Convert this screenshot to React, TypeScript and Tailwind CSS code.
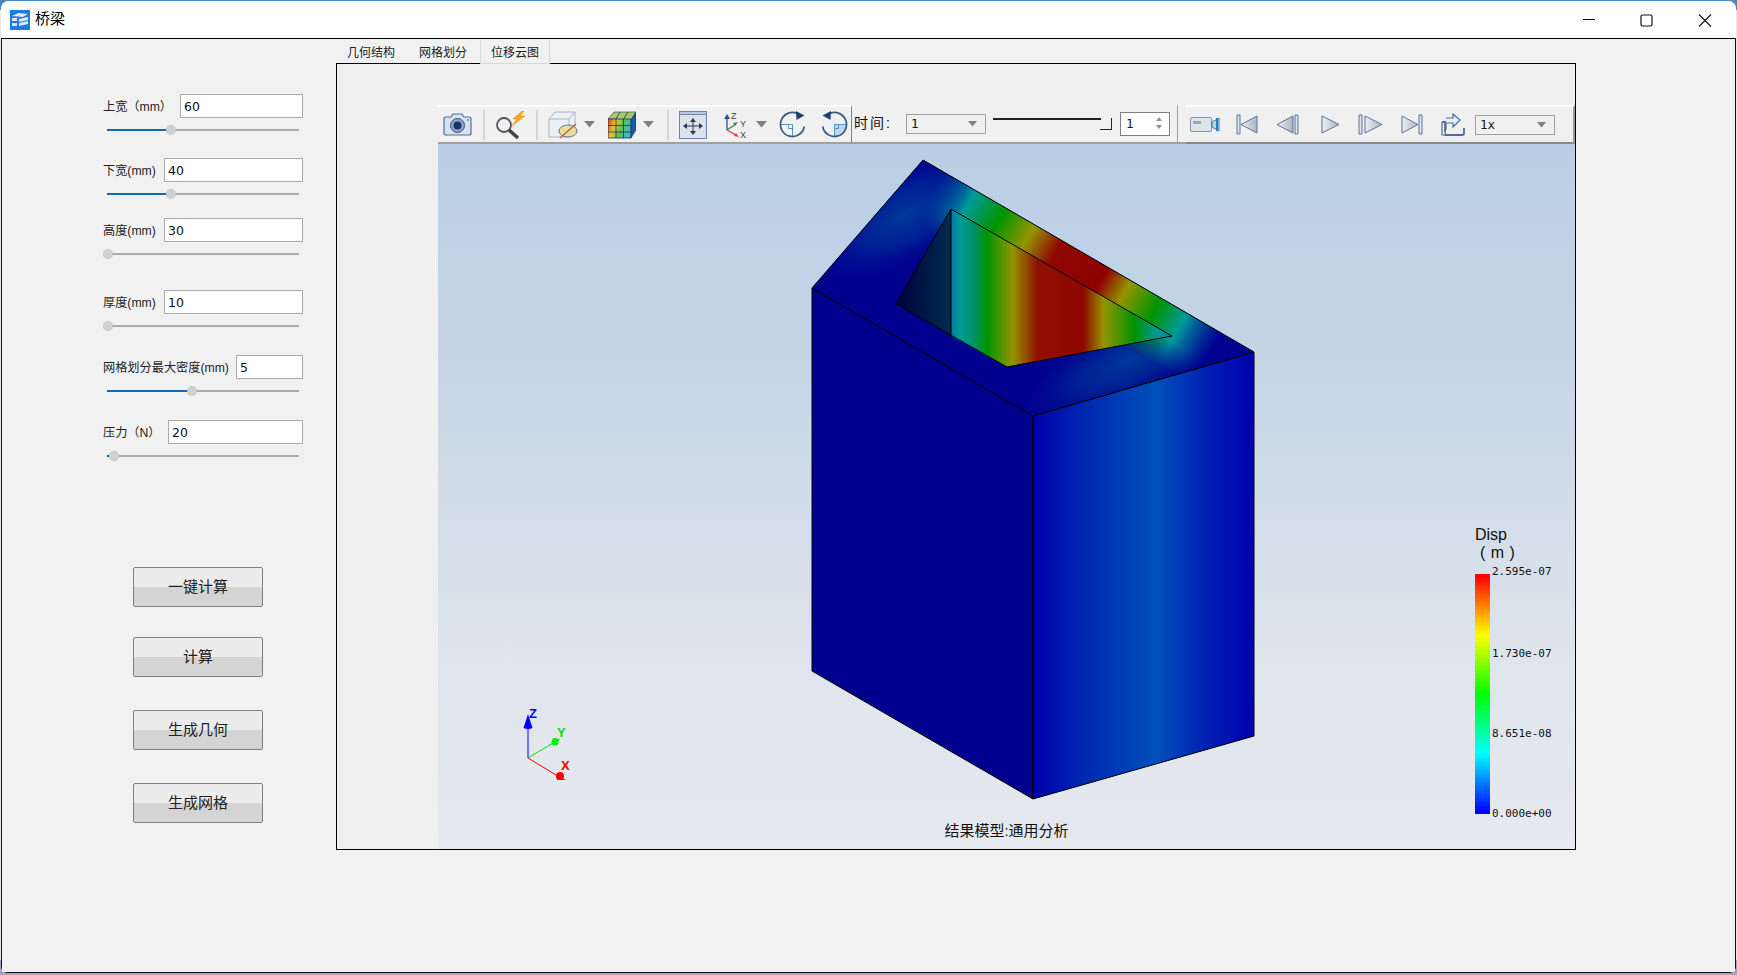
import { useState } from "react";

// jet colour bar, top to bottom
function jet(t: number) {
  const c = (v: number) => Math.round(Math.max(0, Math.min(1, v)) * 255);
  const r = c(t < 0.5 ? 0 : t < 0.75 ? (t - 0.5) * 4 : 1);
  const g = c(t < 0.25 ? t * 4 : t < 0.75 ? 1 : (1 - t) * 4);
  const b = c(t < 0.25 ? 1 : t < 0.5 ? (0.5 - t) * 4 : 0);
  return `rgb(${r},${g},${b})`;
}
const bands = Array.from({ length: 60 }, (_, i) => jet(1 - i / 59));

function Field({ label, value, inputW, pct, rowClass }: { label: string; value: string; inputW: string; pct: number; rowClass: string }) {
  return (
    <div className={rowClass}>
      <div className="flex items-center justify-between h-6">
        <span className="pt-[2px] text-[12.2px] text-[#222] whitespace-pre">{label}</span>
        <input readOnly value={value} className={`${inputW} h-6 border border-[#ababab] bg-white pl-[3px] text-[12.5px] text-[#111] font-['DejaVu_Sans'] outline-none`} />
      </div>
      <div className="relative h-[2px] mt-[11px] ml-1 bg-[#ababab] w-[192px]">
        <div className="absolute left-0 top-0 h-full bg-[#0f68b8]" style={{ width: `${pct}%` }} />
        <div className="absolute top-[-4px] w-[10px] h-[10px] rounded-full bg-[#d0d0d0] border border-dotted border-[#bbb]" style={{ left: `calc(${pct}% - 4px)` }} />
      </div>
    </div>
  );
}

function Btn({ text, cls }: { text: string; cls: string }) {
  return (
    <button className={`${cls} w-[130px] h-10 rounded-[2px] border border-[#808080] bg-[linear-gradient(#ececec_0,#ececec_50%,#d4d4d4_50%,#d4d4d4_100%)] text-[15px] text-[#222] ml-[30px]`}>
      {text}
    </button>
  );
}

function Tri() {
  return <svg width="11" height="7" viewBox="0 0 11 7"><path d="M0 0h11L5.5 6.5z" fill="#808080" /></svg>;
}

function Combo({ value }: { value: string }) {
  return (
    <div className="w-20 h-5 border border-[#a0a0a0] flex items-center justify-between pl-1 pr-2 text-[12.5px] font-['DejaVu_Sans_Mono'] text-[#111] bg-[#f0f0f0]">
      <span className="pt-[2px]">{value}</span>
      <svg width="9" height="6" viewBox="0 0 9 6"><path d="M0 0h9L4.5 5.5z" fill="#808080" /></svg>
    </div>
  );
}

function Sep({ cls }: { cls: string }) {
  return <div className={`${cls} w-[2px] h-[30px] bg-[#d4d4d4]`} />;
}

const stroke = "#4d6e9c";

function Camera() {
  return (
    <svg width="29" height="23" viewBox="0 0 29 23">
      <path d="M1 6q0-2 2-2h5l2-3h9l2 3h5q2 0 2 2v14q0 2-2 2H3q-2 0-2-2z" fill="#d4e3f3" stroke={stroke} strokeWidth="1.2" />
      <circle cx="14.5" cy="12.5" r="7" fill="#8ba7c9" stroke="#456" />
      <circle cx="14.5" cy="12.5" r="4" fill="#1a3468" />
      <circle cx="25" cy="7" r="0.8" fill="#345" />
    </svg>
  );
}

function SearchBolt() {
  return (
    <svg width="30" height="28" viewBox="0 0 30 28">
      <circle cx="8" cy="14" r="7" fill="#eef2f6" stroke="#555" strokeWidth="1.8" />
      <path d="M13 19l9 8" stroke="#444" strokeWidth="3.4" />
      <path d="M26 0l-9 8h4l-5 7 13-10h-5l4-5z" fill="#f5a623" stroke="#d98a10" strokeWidth="0.5" />
    </svg>
  );
}

function ClipCube() {
  return (
    <svg width="30" height="28" viewBox="0 0 30 28">
      <path d="M1 8l6-7h20v17l-6 8H1z" fill="#eceff4" stroke="#a9b4c6" />
      <path d="M1 8h20v18M21 8l6-7" fill="none" stroke="#a9b4c6" />
      <ellipse cx="20" cy="20" rx="9" ry="6" fill="#ecdc9c" stroke="#5a7399" />
      <path d="M12 27L28 13" stroke="#c25a3a" strokeWidth="1.3" />
    </svg>
  );
}

function ColorCube() {
  return (
    <svg width="28" height="28" viewBox="0 0 28 28">
      <defs>
        <linearGradient id="cc" x1="0" y1="0" x2="1" y2="0.3">
          <stop offset="0" stopColor="#d8392a" />
          <stop offset="0.35" stopColor="#e8c531" />
          <stop offset="0.65" stopColor="#5cc24d" />
          <stop offset="1" stopColor="#42b4c8" />
        </linearGradient>
      </defs>
      <path d="M0 8l6-7h22l-5 8z" fill="#a8c86a" stroke="#2a3a5a" strokeWidth="0.6" />
      <path d="M0 8h23v19H0z" fill="url(#cc)" stroke="#23304e" strokeWidth="0.8" />
      <path d="M23 9l5-8v18l-5 8z" fill="#1f58b0" stroke="#23304e" strokeWidth="0.6" />
      <path d="M8 8v19M15.5 8v19M0 14.5h23M0 21h23M12 1L8 8M20 1l-4.5 7" stroke="#23304e" strokeWidth="0.8" />
    </svg>
  );
}

function FitBox() {
  return (
    <svg width="28" height="28" viewBox="0 0 28 28">
      <rect x="0.5" y="0.5" width="27" height="27" fill="#dde2ea" stroke="#6f88aa" />
      <rect x="0.5" y="0.5" width="27" height="3" fill="#b9c8dc" stroke="#6f88aa" />
      <path d="M14 7l-3 4h6zM14 24l-3-4h6zM4 15l4-3v6zM24 15l-4-3v6z" fill="#2a3a50" />
      <path d="M14 10v10M7 15h14" stroke="#2a3a50" />
    </svg>
  );
}

function AxesIcon() {
  return (
    <svg width="26" height="28" viewBox="0 0 26 28">
      <path d="M5 19V6" stroke="#2a50a0" strokeWidth="1.3" />
      <path d="M5 3L2 8h6z" fill="#2a50a0" />
      <path d="M5 19l9-6" stroke="#2a9050" strokeWidth="1.3" />
      <path d="M16 11l-5 1 2 3z" fill="#2a9050" />
      <path d="M5 19l9 5" stroke="#d8404a" strokeWidth="1.3" />
      <path d="M17 26l-5-1 2-3z" fill="#d8404a" />
      <text x="9" y="8" fontSize="9" fill="#444" fontFamily="Liberation Sans">Z</text>
      <text x="18" y="16" fontSize="9" fill="#444" fontFamily="Liberation Sans">Y</text>
      <text x="18" y="27" fontSize="9" fill="#444" fontFamily="Liberation Sans">X</text>
    </svg>
  );
}

// quarter wedge lower left, flipped for the other direction
function Rotate({ flip, wedge }: { flip?: boolean; wedge: string }) {
  return (
    <svg width="27" height="27" viewBox="0 0 27 27" className={flip ? "-scale-x-100" : ""}>
      <path d="M1.5 13.5H13.5V25.5A12 12 0 0 1 1.5 13.5z" fill={wedge} />
      <path d="M1.5 13.5H13.5V25.5M9.5 13.5V17.5H13.5" stroke="#4a87c0" strokeWidth="0.9" fill="none" />
      <path d="M25.3 15.5A12 12 0 1 1 18 2.4" fill="none" stroke="#3d5a80" strokeWidth="1.7" />
      <path d="M17 0l8.5 4.5-8 4.5z" fill="#1e3f70" />
    </svg>
  );
}

function Video() {
  return (
    <svg width="31" height="17" viewBox="0 0 31 17">
      <rect x="0.5" y="1.5" width="21" height="14" rx="1.5" fill="#dfe3ea" stroke="#7e93ad" />
      <rect x="3" y="5" width="8" height="3" fill="#9aa7b8" />
      <path d="M22 6l7-4v13l-7-4z" fill="#b7d6ea" stroke="#4c7da8" />
      <path d="M27 2v13" stroke="#2c7fb8" strokeWidth="2" />
    </svg>
  );
}

function Media({ d, w, bars }: { d: string; w: number; bars: string }) {
  return (
    <svg width={w} height="21" viewBox={`0 0 ${w} 21`}>
      <defs>
        <linearGradient id="md" x1="0" y1="0" x2="1" y2="0">
          <stop offset="0" stopColor="#eef1f5" />
          <stop offset="1" stopColor="#a9b3c0" />
        </linearGradient>
      </defs>
      <path d={d} fill="url(#md)" stroke="#5b7599" strokeWidth="1" />
      {bars && <path d={bars} fill="#dfe4ea" stroke="#5b7599" strokeWidth="1" />}
    </svg>
  );
}

function ExportIcon() {
  return (
    <svg width="24" height="24" viewBox="0 0 24 24">
      <path d="M1 9h3v13h17q2 0 2-2v-5" fill="none" stroke="#4d6e9c" strokeWidth="1.8" />
      <path d="M1 9v13h3M5 17V10h7V14l7-7-7-6v4H5" fill="#e6edf5" stroke="#4d6e9c" strokeWidth="1.2" />
    </svg>
  );
}

function Toolbar() {
  return (
    <div className="h-[39px] flex items-center bg-[#f0f0f0] text-[#111]">
      <div className="h-full flex items-center w-[414px] border-t-2 border-t-white border-b-2 border-b-[#a0a0a0] border-r border-r-[#808080]">
        <div className="ml-[5px]"><Camera /></div>
        <Sep cls="ml-[11px]" />
        <div className="ml-[11px]"><SearchBolt /></div>
        <Sep cls="ml-[10px]" />
        <div className="ml-[10px]"><ClipCube /></div>
        <div className="ml-[6px]"><Tri /></div>
        <div className="ml-[13px]"><ColorCube /></div>
        <div className="ml-[7px]"><Tri /></div>
        <Sep cls="ml-[13px]" />
        <div className="ml-[10px]"><FitBox /></div>
        <div className="ml-[15px]"><AxesIcon /></div>
        <div className="ml-[8px]"><Tri /></div>
        <div className="ml-[12px]"><Rotate wedge="#eef6fc" /></div>
        <div className="ml-[15px]"><Rotate flip wedge="#b8daf4" /></div>
      </div>
      <div className="h-full flex items-center w-[326px] border-r border-r-[#a0a0a0] border-b-2 border-b-[#a0a0a0]">
        <span className="ml-[2px] text-[14px] w-[52px] tracking-[2px]">时间:</span>
        <Combo value="1" />
        <div className="relative ml-[7px] w-[119px] h-[22px]">
          <div className="absolute left-0 right-[11px] top-[5px] h-[2px] bg-[#222]" />
          <div className="absolute right-0 top-[5px] w-[12px] h-[12px] border-r border-b border-[#222]" />
        </div>
        <div className="ml-[8px] w-[50px] h-6 border border-[#808080] flex items-center justify-between pl-[5px] pr-[6px] text-[12.5px] font-['DejaVu_Sans_Mono'] bg-white">
          <span className="pt-[2px]">1</span>
          <svg width="8" height="13" viewBox="0 0 8 13"><path d="M4 0l3 4H1zM4 12l3-4H1z" fill="#909090" /></svg>
        </div>
      </div>
      <div className="h-full w-[8px] border-b-2 border-b-[#a0a0a0]" />
      <div className="h-full flex items-center flex-1 border-t-2 border-t-white border-b-2 border-b-[#8a8a8a] border-r-2 border-r-[#9a9a9a]">
        <div className="ml-[4px]"><Video /></div>
        <div className="ml-[15px]"><Media w={22} d="M21 2v17L5 10.5z" bars="M1 1h3v19H1z" /></div>
        <div className="ml-[18px]"><Media w={24} d="M17 2v17L1 10.5z" bars="M19 1h3v19h-3z" /></div>
        <div className="ml-[21px]"><Media w={19} d="M1 2v17l17-8.5z" bars="" /></div>
        <div className="ml-[18px]"><Media w={25} d="M7 2v17l17-8.5z" bars="M1 1h3v19H1z" /></div>
        <div className="ml-[18px]"><Media w={22} d="M1 2v17l16-8.5z" bars="M18 1h3v19h-3z" /></div>
        <div className="ml-[18px]"><ExportIcon /></div>
        <div className="ml-[10px]"><Combo value="1x" /></div>
      </div>
    </div>
  );
}

// model is drawn in page pixels, viewBox starts at the canvas origin (438,144)
function Model() {
  return (
    <svg className="absolute left-0 top-0" width="1136" height="705" viewBox="438 144 1136 705">
      <defs>
        <linearGradient id="rightFace" gradientUnits="userSpaceOnUse" x1="1033" y1="0" x2="1254" y2="0">
          <stop offset="0" stopColor="#0000ac" />
          <stop offset="0.22" stopColor="#0026b0" />
          <stop offset="0.56" stopColor="#0050ba" />
          <stop offset="0.78" stopColor="#0020b2" />
          <stop offset="1" stopColor="#0000b0" />
        </linearGradient>
        <linearGradient id="topBand" gradientUnits="userSpaceOnUse" x1="923" y1="160" x2="1254" y2="352">
          <stop offset="0.06" stopColor="#004c9c" stopOpacity="0" />
          <stop offset="0.16" stopColor="#009a9a" />
          <stop offset="0.25" stopColor="#009400" />
          <stop offset="0.34" stopColor="#949400" />
          <stop offset="0.42" stopColor="#8f0800" />
          <stop offset="0.56" stopColor="#8f0000" />
          <stop offset="0.63" stopColor="#949400" />
          <stop offset="0.72" stopColor="#009400" />
          <stop offset="0.8" stopColor="#009a9a" />
          <stop offset="0.9" stopColor="#004c9c" stopOpacity="0" />
        </linearGradient>
        <linearGradient id="bandFade" gradientUnits="userSpaceOnUse" x1="923" y1="160" x2="893" y2="212">
          <stop offset="0" stopColor="#fff" />
          <stop offset="0.55" stopColor="#fff" />
          <stop offset="1" stopColor="#000" />
        </linearGradient>
        <mask id="bandMask" maskUnits="userSpaceOnUse" x="438" y="144" width="1136" height="705">
          <rect x="438" y="144" width="1136" height="705" fill="url(#bandFade)" />
        </mask>
        <radialGradient id="halo">
          <stop offset="0" stopColor="#003f98" stopOpacity="0.9" />
          <stop offset="0.5" stopColor="#00389a" stopOpacity="0.55" />
          <stop offset="1" stopColor="#00209a" stopOpacity="0" />
        </radialGradient>
        <linearGradient id="innerFace" gradientUnits="userSpaceOnUse" x1="951" y1="0" x2="1172" y2="0">
          <stop offset="0" stopColor="#007a9a" />
          <stop offset="0.04" stopColor="#009a9a" />
          <stop offset="0.11" stopColor="#009060" />
          <stop offset="0.165" stopColor="#009400" />
          <stop offset="0.28" stopColor="#949400" />
          <stop offset="0.39" stopColor="#901000" />
          <stop offset="0.6" stopColor="#8f0800" />
          <stop offset="0.69" stopColor="#949400" />
          <stop offset="0.83" stopColor="#009400" />
          <stop offset="0.93" stopColor="#009a9a" />
          <stop offset="1" stopColor="#0088a0" />
        </linearGradient>
        <linearGradient id="innerLeft" gradientUnits="userSpaceOnUse" x1="896" y1="0" x2="951" y2="0">
          <stop offset="0" stopColor="#00003c" />
          <stop offset="1" stopColor="#002c4e" />
        </linearGradient>
        <clipPath id="topClip"><path d="M923 160L1254 352L1033 416L812 288z" /></clipPath>
      </defs>
      <path d="M812 288L1033 416V799L812 671z" fill="#00008e" stroke="#000" />
      <path d="M1033 416L1254 352V736L1033 799z" fill="url(#rightFace)" stroke="#000" />
      <path d="M923 160L1254 352L1033 416L812 288z" fill="#00008e" />
      <g clipPath="url(#topClip)">
        <ellipse cx="905" cy="215" rx="105" ry="48" transform="rotate(-28 905 215)" fill="url(#halo)" />
        <ellipse cx="1130" cy="360" rx="115" ry="42" transform="rotate(-26 1130 360)" fill="url(#halo)" />
        <path d="M923 160L1254 352L1033 416L812 288z" fill="url(#topBand)" mask="url(#bandMask)" />
      </g>
      <path d="M923 160L1254 352L1033 416L812 288z" fill="none" stroke="#000" />
      <path d="M951 209L896 304L951 336z" fill="url(#innerLeft)" />
      <path d="M951 209L1172 336L1007 367L951 336z" fill="url(#innerFace)" />
      <path d="M896 304L951 209L1172 336L1007 367L896 304M951 209V336" fill="none" stroke="#000" />

      <path d="M528 758V725" stroke="#0000ff" />
      <path d="M528 714l-4.5 14q4.5 2 9 0z" fill="#0000ff" />
      <path d="M528 758L553 743" stroke="#00e000" />
      <circle cx="555" cy="742" r="3.5" fill="#00f000" />
      <path d="M560 739l-7-1 2 6z" fill="#00f000" />
      <path d="M528 758L556 775" stroke="#f00000" />
      <circle cx="560" cy="776" r="4" fill="#ff0000" />
      <path d="M566 780l-9 0-1-5z" fill="#ff0000" />
      <text x="529" y="718" fontSize="13" fontWeight="700" fill="#0000ff" fontFamily="Liberation Sans">Z</text>
      <text x="557" y="737" fontSize="13" fontWeight="700" fill="#00e000" fontFamily="Liberation Sans">Y</text>
      <text x="561" y="770" fontSize="13" fontWeight="700" fill="#f00000" fontFamily="Liberation Sans">X</text>
    </svg>
  );
}

function Legend() {
  return (
    <div className="absolute left-[1037px] top-[382px] text-[#111]">
      <div className="text-[16px] leading-[18px] font-['Liberation_Sans']">Disp</div>
      <div className="text-[16px] leading-[18px] font-['Liberation_Sans'] whitespace-pre tracking-[0.5px]"> ( m )</div>
      <div className="relative mt-[12px] w-[15px] h-[240px] flex flex-col">
        {bands.map((c, i) => (
          <div key={i} className="flex-1" style={{ background: c }} />
        ))}
        <span className="absolute left-[17px] top-[-9px] text-[11px] leading-[14px] whitespace-nowrap font-['DejaVu_Sans_Mono']">2.595e-07</span>
        <span className="absolute left-[17px] top-[73px] text-[11px] leading-[14px] whitespace-nowrap font-['DejaVu_Sans_Mono']">1.730e-07</span>
        <span className="absolute left-[17px] top-[153px] text-[11px] leading-[14px] whitespace-nowrap font-['DejaVu_Sans_Mono']">8.651e-08</span>
        <span className="absolute left-[17px] top-[233px] text-[11px] leading-[14px] whitespace-nowrap font-['DejaVu_Sans_Mono']">0.000e+00</span>
      </div>
    </div>
  );
}

export default function App() {
  const [tab] = useState(2);
  const tabs = ["几何结构", "网格划分", "位移云图"];
  return (
    <div className="w-[1737px] h-[975px] overflow-hidden px-px pt-px bg-[linear-gradient(#4a86c0_0,#4a86c0_10px,#e8e8ec_10px,#e8e8ec_960px,#a8a4bd_960px,#a8a4bd_100%)] font-['Liberation_Sans','Noto_Sans_CJK_SC',sans-serif]">
      <div className="h-[972px] flex flex-col rounded-t-[8px] rounded-b-[6px] bg-white overflow-hidden">
        <div className="h-[38px] shrink-0 flex items-center bg-white border-b border-b-black">
          <svg className="ml-[9px]" width="20" height="20" viewBox="0 0 20 20">
            <rect width="20" height="20" fill="#1e7ae6" />
            <path d="M2 6l6-3 10 1-5 3zM2 8h5v3H2zM2 13h5v3H2zM9 9l9-2v3l-9 2zM9 13l9-2v3l-9 2z" fill="#dbe9fa" />
          </svg>
          <span className="ml-[5px] text-[15px] text-black">桥梁</span>
          <div className="ml-auto mr-[3px] flex items-center">
            <svg width="58" height="36" viewBox="0 0 58 36"><path d="M24 17.5h12" stroke="#111" strokeWidth="1.2" /></svg>
            <svg width="58" height="36" viewBox="0 0 58 36"><rect x="24" y="13" width="11" height="11" rx="1.5" fill="none" stroke="#111" strokeWidth="1.2" /></svg>
            <svg width="58" height="36" viewBox="0 0 58 36"><path d="M24 12.5l12 12M36 12.5l-12 12" stroke="#111" strokeWidth="1.1" /></svg>
          </div>
        </div>
        <div className="flex-1 flex bg-[#f1f1f1] border-l border-l-[#111] border-r border-r-[#111] border-b border-b-[#111]">
          <div className="w-[334px] shrink-0 flex flex-col pl-[101px] pr-[33px]">
            <Field rowClass="mt-[55px]" label="上宽（mm）" value="60" inputW="w-[123px]" pct={33} />
            <Field rowClass="mt-[27px]" label="下宽(mm)" value="40" inputW="w-[139px]" pct={33} />
            <Field rowClass="mt-[23px]" label="高度(mm)" value="30" inputW="w-[139px]" pct={0} />
            <Field rowClass="mt-[35px]" label="厚度(mm)" value="10" inputW="w-[139px]" pct={0} />
            <Field rowClass="mt-[28px]" label="网格划分最大密度(mm)" value="5" inputW="w-[67px]" pct={44} />
            <Field rowClass="mt-[28px]" label="压力（N）" value="20" inputW="w-[135px]" pct={3} />
            <Btn cls="mt-[110px]" text="一键计算" />
            <Btn cls="mt-[30px]" text="计算" />
            <Btn cls="mt-[33px]" text="生成几何" />
            <Btn cls="mt-[33px]" text="生成网格" />
          </div>
          <div className="w-[1240px] shrink-0 flex flex-col pt-[1px]">
            <div className="relative z-10 h-[23px] flex text-[12px] text-[#222]">
              {tabs.map((t, i) => (
                <div
                  key={t}
                  className={i === tab ? "w-[70px] h-[24px] pt-[2px] flex items-center justify-center border-l border-r border-b border-[#d8d8d8] bg-[#f1f1f1]" : "w-[72px] pt-[2px] pl-[11px] flex items-center"}
                >
                  {t}
                </div>
              ))}
            </div>
            <div className="h-[787px] border border-black flex flex-col pt-[41px] pl-[101px] bg-[#f0f0f0]">
              <Toolbar />
              <div className="relative flex-1 bg-[linear-gradient(#b9cee5,#c5d5e6_30%,#dfe5ec_75%,#e6e9ee)]">
                <Model />
                <Legend />
                <div className="absolute left-0 right-0 bottom-[9px] text-center text-[15px] leading-[18px] text-[#111]">结果模型:通用分析</div>
              </div>
            </div>
          </div>
        </div>
      </div>
    </div>
  );
}
